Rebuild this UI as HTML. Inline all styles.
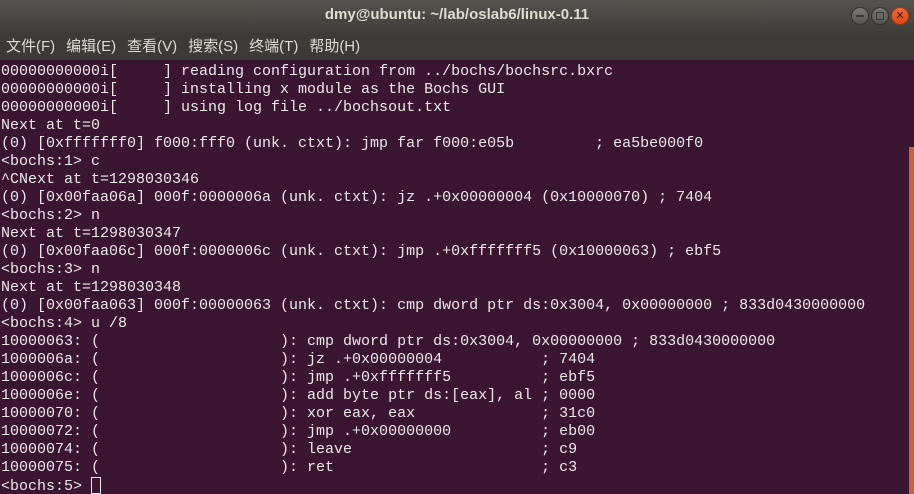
<!DOCTYPE html>
<html><head><meta charset="utf-8"><style>
html,body{margin:0;padding:0;width:914px;height:494px;overflow:hidden;background:#3b1632}
#title{height:33px;background:linear-gradient(#55534e,#3f3e3a);position:relative;color:#dfdbd2;font:bold 15px "Liberation Sans","Noto Sans CJK SC",sans-serif;text-align:center;line-height:30px}
#menu{height:27px;background:#3c3b37;color:#dfdbd2;font:15px "Liberation Sans","Noto Sans CJK SC",sans-serif;line-height:28px;padding-left:6px;word-spacing:0}
#menu span{margin-right:11px}
.b{position:absolute;top:7px;width:16px;height:16px;border-radius:50%;background:linear-gradient(#7c7b76,#55544f);border:1px solid #33322e}
#term{position:relative;height:434px;color:#ece8e9;font:15px/18px "Liberation Mono",monospace;white-space:pre;padding:3px 0 0 1px;box-sizing:border-box}
#sb{position:absolute;right:0;top:87px;width:5px;height:347px;background:#c8603b}
.cur{display:inline-block;width:8px;height:15px;border:1px solid #ece8e9;vertical-align:-4px;line-height:0}
</style></head><body>
<div id="title">dmy@ubuntu: ~/lab/oslab6/linux-0.11
<div class="b" style="left:851px"><div style="position:absolute;left:4px;top:7px;width:8px;height:2px;background:#3a3935"></div></div>
<div class="b" style="left:871px"><div style="position:absolute;left:4px;top:4px;width:6px;height:6px;border:1px solid #3a3935"></div></div>
<div class="b" style="left:891px;background:linear-gradient(#f26b3a,#dd4814);border-color:#a33a10;font:bold 11px/16px 'DejaVu Sans',sans-serif;color:#3a1a0a;text-align:center">✕</div>
</div>
<div id="menu"><span>文件(F)</span><span>编辑(E)</span><span>查看(V)</span><span>搜索(S)</span><span>终端(T)</span><span>帮助(H)</span></div>
<div id="term">00000000000i[     ] reading configuration from ../bochs/bochsrc.bxrc
00000000000i[     ] installing x module as the Bochs GUI
00000000000i[     ] using log file ../bochsout.txt
Next at t=0
(0) [0xfffffff0] f000:fff0 (unk. ctxt): jmp far f000:e05b         ; ea5be000f0
&lt;bochs:1&gt; c
^CNext at t=1298030346
(0) [0x00faa06a] 000f:0000006a (unk. ctxt): jz .+0x00000004 (0x10000070) ; 7404
&lt;bochs:2&gt; n
Next at t=1298030347
(0) [0x00faa06c] 000f:0000006c (unk. ctxt): jmp .+0xfffffff5 (0x10000063) ; ebf5
&lt;bochs:3&gt; n
Next at t=1298030348
(0) [0x00faa063] 000f:00000063 (unk. ctxt): cmp dword ptr ds:0x3004, 0x00000000 ; 833d0430000000
&lt;bochs:4&gt; u /8
10000063: (                    ): cmp dword ptr ds:0x3004, 0x00000000 ; 833d0430000000
1000006a: (                    ): jz .+0x00000004           ; 7404
1000006c: (                    ): jmp .+0xfffffff5          ; ebf5
1000006e: (                    ): add byte ptr ds:[eax], al ; 0000
10000070: (                    ): xor eax, eax              ; 31c0
10000072: (                    ): jmp .+0x00000000          ; eb00
10000074: (                    ): leave                     ; c9
10000075: (                    ): ret                       ; c3
&lt;bochs:5&gt; <span class="cur"></span><div id="sb"></div></div>
</body></html>
